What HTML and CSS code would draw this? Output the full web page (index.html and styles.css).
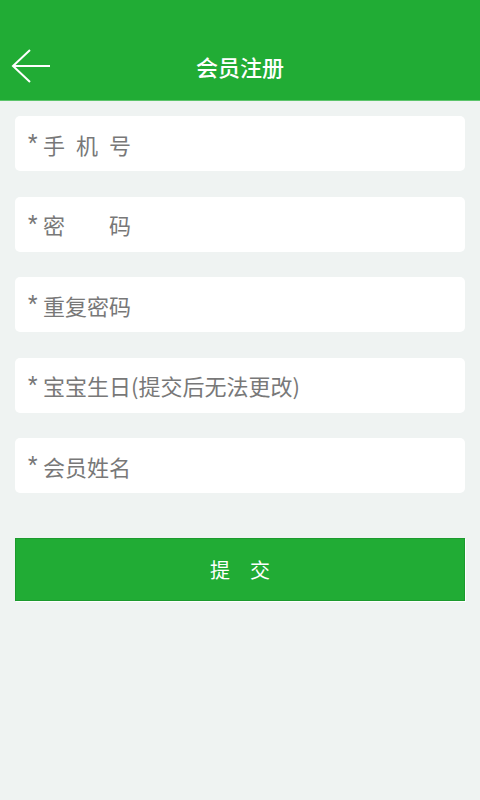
FILE: index.html
```html
<!DOCTYPE html>
<html lang="zh-CN">
<head>
<meta charset="utf-8">
<title>会员注册</title>
<link rel="stylesheet" href="styles.css">
</head>
<body>
<header class="topbar">
  <span class="back">
    <svg width="40" height="34" viewBox="0 0 40 34"><path d="M19 1 L2 17 L19 33 M2 17 H39" fill="none" stroke="#fff" stroke-width="2"/></svg>
  </span>
  <h1 class="title">会员注册</h1>
</header>
<main class="form">
  <div class="field"><span class="star">*</span><span class="ph">手&#8194;机&#8194;号</span></div>
  <div class="field"><span class="star">*</span><span class="ph">密&#12288;&#12288;码</span></div>
  <div class="field"><span class="star">*</span><span class="ph">重复密码</span></div>
  <div class="field"><span class="star">*</span><span class="ph">宝宝生日(提交后无法更改)</span></div>
  <div class="field"><span class="star">*</span><span class="ph">会员姓名</span></div>
  <button class="submit">提&#12288;交</button>
</main>
</body>
</html>
```
FILE: styles.css
```css
html, body {
  margin: 0;
  padding: 0;
}
body {
  width: 480px;
  height: 800px;
  background: #eff3f2;
  font-family: "Noto Sans CJK SC", "Noto Sans", sans-serif;
}
.topbar {
  background: #21ac35;
  border-bottom: 1px solid #5cc46b;
  position: relative;
  display: flex;
  align-items: center;
  justify-content: center;
  padding-top: 33px;
  box-sizing: content-box;
  height: 67px;
}
.back {
  position: absolute;
  left: 11px;
  top: 49px;
  width: 40px;
  height: 34px;
}
.back svg { display: block; }
.title {
  margin: 0;
  color: #fff;
  font-size: 22px;
  font-weight: 500;
  line-height: 1;
  margin-top: -1px;
}
.form {
  padding: 15px 15px 0;
  display: flex;
  flex-direction: column;
  gap: 25.5px;
}
.field {
  height: 55px;
  background: #fff;
  border-radius: 5px;
  display: flex;
  align-items: center;
  padding-left: 13px;
  color: #777;
  font-size: 22px;
}
.star {
  font-family: "Roboto", sans-serif;
  font-size: 22px;
  width: 15px;
  margin-top: -2px;
}
.ph {
  line-height: 1;
  color: #787878;
}
.submit {
  margin-top: 19.5px;
  height: 63px;
  background: #21ac35;
  border: 1px solid #1c9a2e;
  box-shadow: 1px 1px 0 #fff;
  border-radius: 0;
  color: #fff;
  font-family: "Noto Sans CJK SC", sans-serif;
  font-size: 20px;
  padding: 0;
}
```
